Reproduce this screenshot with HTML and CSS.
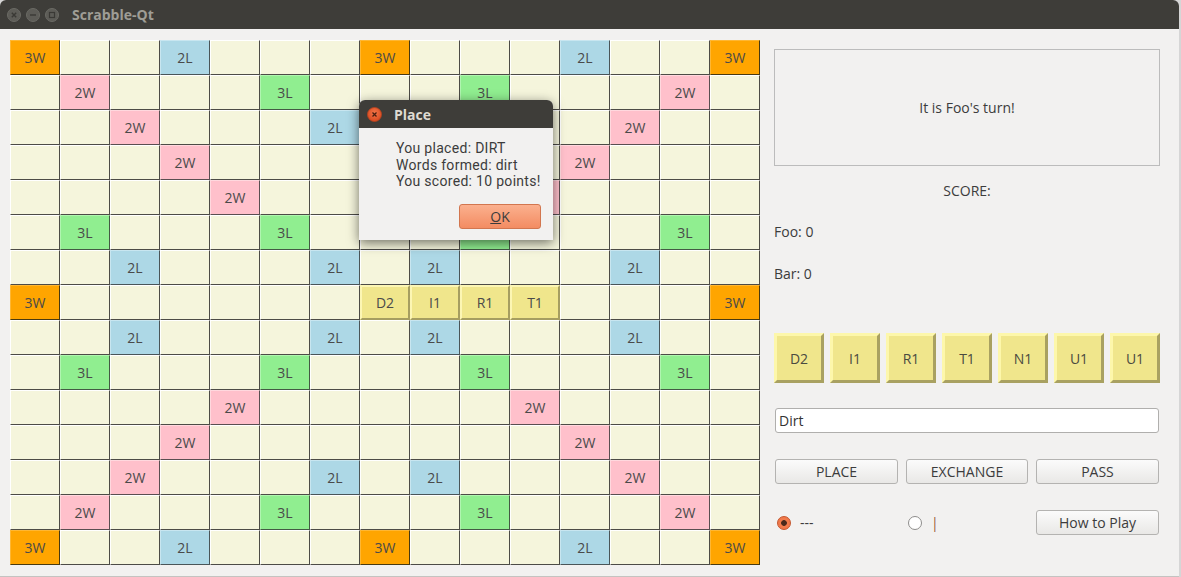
FILE: index.html
```html
<!DOCTYPE html>
<html>
<head>
<meta charset="utf-8">
<title>Scrabble-Qt</title>
<link rel="stylesheet" href="styles.css">
</head>
<body>
<div class="window">
  <div class="titlebar">
    <span class="wbtn"><svg width="14" height="14" viewBox="0 0 14 14"><circle cx="7" cy="7" r="6.5" fill="#5d5c57" stroke="#6b6a65"/><path d="M4.8 4.8 L9.2 9.2 M9.2 4.8 L4.8 9.2" stroke="#3a3935" stroke-width="1.4"/></svg></span>
    <span class="wbtn"><svg width="14" height="14" viewBox="0 0 14 14"><circle cx="7" cy="7" r="6.5" fill="#5d5c57" stroke="#6b6a65"/><path d="M4 7 H10" stroke="#3a3935" stroke-width="1.4"/></svg></span>
    <span class="wbtn"><svg width="14" height="14" viewBox="0 0 14 14"><circle cx="7" cy="7" r="6.5" fill="#5d5c57" stroke="#6b6a65"/><rect x="4.5" y="4.5" width="5" height="5" fill="none" stroke="#3a3935" stroke-width="1.2"/></svg></span>
    <span class="wtitle">Scrabble-Qt</span>
  </div>
  <div class="content">
    <div class="board">
      <div class="sq tw">3W</div><div class="sq"></div><div class="sq"></div><div class="sq dl">2L</div><div class="sq"></div><div class="sq"></div><div class="sq"></div><div class="sq tw">3W</div><div class="sq"></div><div class="sq"></div><div class="sq"></div><div class="sq dl">2L</div><div class="sq"></div><div class="sq"></div><div class="sq tw">3W</div>
      <div class="sq"></div><div class="sq dw">2W</div><div class="sq"></div><div class="sq"></div><div class="sq"></div><div class="sq tl">3L</div><div class="sq"></div><div class="sq"></div><div class="sq"></div><div class="sq tl">3L</div><div class="sq"></div><div class="sq"></div><div class="sq"></div><div class="sq dw">2W</div><div class="sq"></div>
      <div class="sq"></div><div class="sq"></div><div class="sq dw">2W</div><div class="sq"></div><div class="sq"></div><div class="sq"></div><div class="sq dl">2L</div><div class="sq"></div><div class="sq dl">2L</div><div class="sq"></div><div class="sq"></div><div class="sq"></div><div class="sq dw">2W</div><div class="sq"></div><div class="sq"></div>
      <div class="sq"></div><div class="sq"></div><div class="sq"></div><div class="sq dw">2W</div><div class="sq"></div><div class="sq"></div><div class="sq"></div><div class="sq"></div><div class="sq"></div><div class="sq"></div><div class="sq"></div><div class="sq dw">2W</div><div class="sq"></div><div class="sq"></div><div class="sq"></div>
      <div class="sq"></div><div class="sq"></div><div class="sq"></div><div class="sq"></div><div class="sq dw">2W</div><div class="sq"></div><div class="sq"></div><div class="sq"></div><div class="sq"></div><div class="sq"></div><div class="sq dw">2W</div><div class="sq"></div><div class="sq"></div><div class="sq"></div><div class="sq"></div>
      <div class="sq"></div><div class="sq tl">3L</div><div class="sq"></div><div class="sq"></div><div class="sq"></div><div class="sq tl">3L</div><div class="sq"></div><div class="sq"></div><div class="sq"></div><div class="sq tl">3L</div><div class="sq"></div><div class="sq"></div><div class="sq"></div><div class="sq tl">3L</div><div class="sq"></div>
      <div class="sq"></div><div class="sq"></div><div class="sq dl">2L</div><div class="sq"></div><div class="sq"></div><div class="sq"></div><div class="sq dl">2L</div><div class="sq"></div><div class="sq dl">2L</div><div class="sq"></div><div class="sq"></div><div class="sq"></div><div class="sq dl">2L</div><div class="sq"></div><div class="sq"></div>
      <div class="sq tw">3W</div><div class="sq"></div><div class="sq"></div><div class="sq"></div><div class="sq"></div><div class="sq"></div><div class="sq"></div><div class="sq tile">D2</div><div class="sq tile">I1</div><div class="sq tile">R1</div><div class="sq tile">T1</div><div class="sq"></div><div class="sq"></div><div class="sq"></div><div class="sq tw">3W</div>
      <div class="sq"></div><div class="sq"></div><div class="sq dl">2L</div><div class="sq"></div><div class="sq"></div><div class="sq"></div><div class="sq dl">2L</div><div class="sq"></div><div class="sq dl">2L</div><div class="sq"></div><div class="sq"></div><div class="sq"></div><div class="sq dl">2L</div><div class="sq"></div><div class="sq"></div>
      <div class="sq"></div><div class="sq tl">3L</div><div class="sq"></div><div class="sq"></div><div class="sq"></div><div class="sq tl">3L</div><div class="sq"></div><div class="sq"></div><div class="sq"></div><div class="sq tl">3L</div><div class="sq"></div><div class="sq"></div><div class="sq"></div><div class="sq tl">3L</div><div class="sq"></div>
      <div class="sq"></div><div class="sq"></div><div class="sq"></div><div class="sq"></div><div class="sq dw">2W</div><div class="sq"></div><div class="sq"></div><div class="sq"></div><div class="sq"></div><div class="sq"></div><div class="sq dw">2W</div><div class="sq"></div><div class="sq"></div><div class="sq"></div><div class="sq"></div>
      <div class="sq"></div><div class="sq"></div><div class="sq"></div><div class="sq dw">2W</div><div class="sq"></div><div class="sq"></div><div class="sq"></div><div class="sq"></div><div class="sq"></div><div class="sq"></div><div class="sq"></div><div class="sq dw">2W</div><div class="sq"></div><div class="sq"></div><div class="sq"></div>
      <div class="sq"></div><div class="sq"></div><div class="sq dw">2W</div><div class="sq"></div><div class="sq"></div><div class="sq"></div><div class="sq dl">2L</div><div class="sq"></div><div class="sq dl">2L</div><div class="sq"></div><div class="sq"></div><div class="sq"></div><div class="sq dw">2W</div><div class="sq"></div><div class="sq"></div>
      <div class="sq"></div><div class="sq dw">2W</div><div class="sq"></div><div class="sq"></div><div class="sq"></div><div class="sq tl">3L</div><div class="sq"></div><div class="sq"></div><div class="sq"></div><div class="sq tl">3L</div><div class="sq"></div><div class="sq"></div><div class="sq"></div><div class="sq dw">2W</div><div class="sq"></div>
      <div class="sq tw">3W</div><div class="sq"></div><div class="sq"></div><div class="sq dl">2L</div><div class="sq"></div><div class="sq"></div><div class="sq"></div><div class="sq tw">3W</div><div class="sq"></div><div class="sq"></div><div class="sq"></div><div class="sq dl">2L</div><div class="sq"></div><div class="sq"></div><div class="sq tw">3W</div>
    </div>
    <div class="panel">
      <div class="msgbox">It is Foo's turn!</div>
      <div class="score-title">SCORE:</div>
      <div class="score-line first">Foo: 0</div>
      <div class="score-line">Bar: 0</div>
      <div class="rack">
        <div class="rtile">D2</div><div class="rtile">I1</div><div class="rtile">R1</div><div class="rtile">T1</div><div class="rtile">N1</div><div class="rtile">U1</div><div class="rtile">U1</div>
      </div>
      <div class="lineedit">Dirt</div>
      <div class="btnrow">
        <div class="pbtn">PLACE</div>
        <div class="pbtn">EXCHANGE</div>
        <div class="pbtn">PASS</div>
      </div>
      <div class="btnrow radios">
        <div class="radio-item"><span class="radio on"></span><span class="rlabel">---</span></div>
        <div class="radio-item"><span class="radio"></span><span class="rlabel bar">|</span></div>
        <div class="pbtn">How to Play</div>
      </div>
    </div>
  </div>
  <div class="dialog">
    <div class="dtitle">
      <span class="dclose"><svg width="15" height="15" viewBox="0 0 15 15"><defs><radialGradient id="g" cx="50%" cy="40%" r="60%"><stop offset="0" stop-color="#f3774a"/><stop offset="1" stop-color="#d9491f"/></radialGradient></defs><circle cx="7.5" cy="7.5" r="7" fill="url(#g)" stroke="#b9421e" stroke-width="0.8"/><path d="M5.5 5.5 L9.5 9.5 M9.5 5.5 L5.5 9.5" stroke="#4a1e10" stroke-width="1.3"/></svg></span>
      <span class="dname">Place</span>
    </div>
    <div class="dbody">
      <div class="dline">You placed: DIRT</div>
      <div class="dline">Words formed: dirt</div>
      <div class="dline">You scored: 10 points!</div>
      <div class="okbtn"><u>O</u>K</div>
    </div>
  </div>
</div>
</body>
</html>
```
FILE: styles.css
```css
html, body {
  margin: 0;
  padding: 0;
}
body {
  background: #d6d6d6;
  font-family: "Open Sans", "Noto Sans", "DejaVu Sans", sans-serif;
  font-size: 14px;
  color: #3c3c3c;
}
.window {
  position: relative;
  width: 1179px;
  height: 576px;
  background: #f2f1f0;
  border-radius: 6px 6px 0 0;
  border-bottom: 1px solid #c4c3c1;
}
.titlebar {
  height: 29px;
  background: #3e3d39;
  border-radius: 6px 6px 0 0;
  display: flex;
  align-items: center;
  padding-left: 7px;
  box-sizing: border-box;
}
.wbtn {
  display: flex;
  width: 14px;
  height: 14px;
  margin-right: 5px;
}
.wtitle {
  margin-left: 8px;
  font-weight: bold;
  font-size: 14px;
  color: #9f9d96;
}
.content {
  display: flex;
  padding: 11px 0 0 10px;
  gap: 14px;
}
.board {
  display: grid;
  grid-template-columns: repeat(15, 50px);
  grid-auto-rows: 35px;
  width: 750px;
}
.sq {
  box-sizing: border-box;
  background: #f5f5dc;
  border-style: solid;
  border-width: 1px;
  border-color: #ffffff #4c4b46 #4c4b46 #ffffff;
  display: flex;
  align-items: center;
  justify-content: center;
  font-size: 14px;
  color: #4a4a4a;
}
.sq.tw { background: #ffa500; border-color: #ffb733 #4a3a10 #4a3a10 #ffb733; }
.sq.dw { background: #ffc0cb; border-color: #ffd8de #5a4e50 #5a4e50 #ffd8de; }
.sq.dl { background: #add8e6; border-color: #c8e6f0 #4a5558 #4a5558 #c8e6f0; }
.sq.tl { background: #90ee90; border-color: #b0f5b0 #445a44 #445a44 #b0f5b0; }
.sq.tile {
  background: #f0e68c;
  border-width: 2px;
  border-color: #fcf6b4 #a69e60 #a69e60 #fcf6b4;
  box-shadow: 1px 1px 0 #4c4b46;
}
.panel {
  width: 386px;
  display: flex;
  flex-direction: column;
  padding-top: 9px;
}
.msgbox {
  height: 117px;
  box-sizing: border-box;
  border: 1px solid #bcbcbc;
  display: flex;
  align-items: center;
  justify-content: center;
}
.score-title {
  margin-top: 16px;
  line-height: 18px;
  text-align: center;
}
.score-line {
  margin-top: 24px;
  line-height: 18px;
}
.score-line.first { margin-top: 23px; }
.rack {
  margin-top: 50px;
  display: grid;
  grid-template-columns: repeat(7, 50px);
  gap: 6px;
}
.rtile {
  box-sizing: border-box;
  height: 50px;
  background: #f0e68c;
  border-style: solid;
  border-width: 3px;
  border-color: #fdf7ab #a9a161 #a9a161 #fdf7ab;
  display: flex;
  align-items: center;
  justify-content: center;
  color: #4a4a40;
}
.lineedit {
  margin: 25px 1px 0 1px;
  height: 25px;
  box-sizing: border-box;
  background: #ffffff;
  border: 1px solid #b0afad;
  border-radius: 3px;
  padding-left: 3px;
  display: flex;
  align-items: center;
  color: #333333;
}
.btnrow {
  margin: 26px 1px 0 1px;
  display: grid;
  grid-template-columns: 123px 122px 123px;
  column-gap: 8px;
  height: 25px;
}
.btnrow.radios { margin-top: 26px; }
.pbtn {
  box-sizing: border-box;
  height: 25px;
  border: 1px solid #b4b3b1;
  border-radius: 3px;
  background: linear-gradient(#fbfbfb, #e9e8e6);
  display: flex;
  align-items: center;
  justify-content: center;
  color: #3c3c3c;
}
.radio-item {
  display: flex;
  align-items: center;
  padding-left: 2px;
}
.radio {
  box-sizing: border-box;
  width: 14px;
  height: 14px;
  border-radius: 50%;
  border: 1px solid #8e8d8b;
  background: #ffffff;
  margin-right: 9px;
}
.radio.on {
  border-color: #c4552c;
  background: radial-gradient(circle, #4b2a1c 0, #4b2a1c 2.5px, #f27c4c 3.2px, #ee7448 100%);
}
.rlabel { color: #3c3c3c; }
.rlabel.bar { color: #9a5b33; }
.dialog {
  position: absolute;
  left: 359px;
  top: 100px;
  width: 194px;
  height: 140px;
  background: #f2f1f0;
  border-radius: 6px 6px 0 0;
  box-shadow: 0 3px 12px rgba(0,0,0,0.55);
}
.dtitle {
  height: 28px;
  background: #3e3d39;
  border-radius: 6px 6px 0 0;
  display: flex;
  align-items: center;
  padding-left: 8px;
  box-sizing: border-box;
}
.dclose { display: flex; width: 15px; height: 15px; }
.dname {
  margin-left: 12px;
  font-weight: bold;
  font-size: 14px;
  color: #dfdbd2;
}
.dbody {
  padding: 12px 0 0 37px;
}
.dline {
  font-family: Roboto, "Open Sans", sans-serif;
  font-size: 14px;
  letter-spacing: 0.3px;
  height: 16.5px;
  line-height: 16.5px;
  color: #3c3c3c;
  white-space: nowrap;
}
.okbtn {
  margin: 14px 0 0 63px;
  width: 82px;
  height: 25px;
  box-sizing: border-box;
  border: 1px solid #d2764f;
  border-radius: 3px;
  background: linear-gradient(#fbb08e, #f38c62);
  display: flex;
  align-items: center;
  justify-content: center;
  color: #3c3c3c;
}
.okbtn u { text-decoration: underline; }
```
